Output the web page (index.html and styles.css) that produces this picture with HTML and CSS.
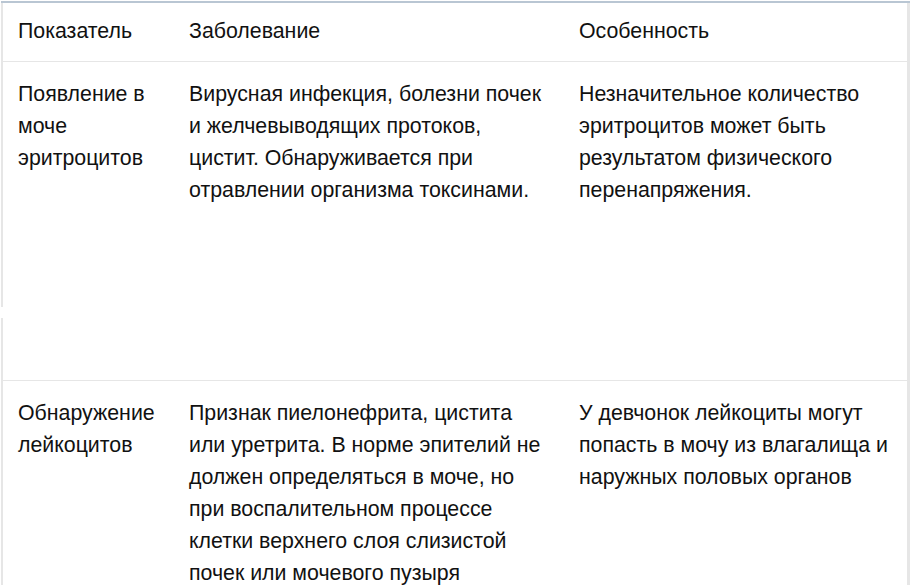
FILE: index.html
```html
<!DOCTYPE html>
<html lang="ru">
<head>
<meta charset="utf-8">
<link rel="stylesheet" href="styles.css">
</head>
<body>
<div class="frame">
  <div class="table">
    <div class="row head">
      <div class="cell">Показатель</div>
      <div class="cell">Заболевание</div>
      <div class="cell">Особенность</div>
    </div>
    <div class="row tall">
      <div class="cell">Появление в моче эритроцитов</div>
      <div class="cell">Вирусная инфекция, болезни почек и желчевыводящих протоков, цистит. Обнаруживается при отравлении организма токсинами.</div>
      <div class="cell">Незначительное количество эритроцитов может быть результатом физического перенапряжения.</div>
      <span class="gap"></span>
    </div>
    <div class="row">
      <div class="cell">Обнаружение лейкоцитов</div>
      <div class="cell">Признак пиелонефрита, цистита или уретрита. В норме эпителий не должен определяться в моче, но при воспалительном процессе клетки верхнего слоя слизистой почек или мочевого пузыря</div>
      <div class="cell">У девчонок лейкоциты могут попасть в мочу из влагалища и наружных половых органов</div>
    </div>
  </div>
</div>
</body>
</html>
```
FILE: styles.css
```css
html, body {
  margin: 0;
  padding: 0;
  background: #ffffff;
}
body {
  font-family: "Liberation Sans", Arial, sans-serif;
  color: #111111;
  overflow: hidden;
  height: 585px;
}
.frame {
  padding-top: 1px;
  width: 913px;
}
.table {
  border-top: 2px solid #b9c6d3;
  width: 909px;
  margin-left: 1px;
}
.row {
  position: relative;
  display: grid;
  grid-template-columns: 171px 390px 1fr;
  border-left: 2px solid #e6e6e6;
  border-right: 3px solid #e6e6e6;
  border-bottom: 1px solid #e6e6e6;
  font-size: 16pt;
  line-height: 32px;
}
.cell {
  padding: 16px 15px 0 15px;
}
.head {
  height: 58px;
}
.head .cell {
  padding-top: 12px;
  padding-bottom: 0;
}
.tall {
  height: 318px;
}
.gap {
  position: absolute;
  left: -2px;
  top: 245px;
  width: 2px;
  height: 11px;
  background: #ffffff;
}
```
